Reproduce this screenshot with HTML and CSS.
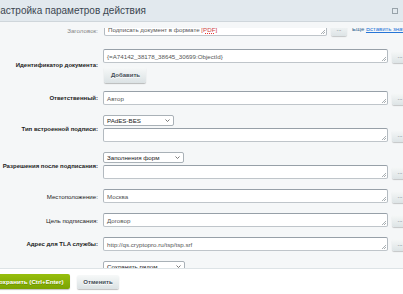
FILE: index.html
```html
<!DOCTYPE html>
<html lang="ru">
<head>
    <meta charset="UTF-8">
    <title>Настройка параметров действия</title>
    <link rel="stylesheet" href="styles.css">
</head>
<body>
<div class="dialog">
    <div class="titlebar">
        <span class="title">Настройка параметров действия</span>
        <span class="close"></span>
    </div>

    <div class="content">
        <div class="scroll">
            <div class="form">
                <!-- Заголовок -->
                <div class="label faint">Заголовок:</div>
                <div class="field row0">
                    <div class="line">
                        <span class="area short"><span class="box">Подписать документ в формате <span class="typo">[PDF]</span></span></span>
                        <button class="dots">...</button>
                        <span class="more">Ещё <a href="#">Вставить значение</a></span>
                    </div>
                </div>

                <!-- Идентификатор -->
                <div class="label bold">Идентификатор документа:</div>
                <div class="field row1">
                    <div class="line">
                        <span class="area"><textarea>{=A74142_38178_38645_30699:ObjectId}</textarea></span>
                        <button class="dots">...</button>
                    </div>
                    <button class="btn add">Добавить</button>
                </div>

                <div class="label bold">Ответственный:</div>
                <div class="field">
                    <div class="line">
                        <span class="area"><textarea>Автор</textarea></span>
                        <button class="dots">...</button>
                    </div>
                </div>

                <div class="label bold">Тип встроенной подписи:</div>
                <div class="field">
                    <div class="select w71"><span>PAdES-BES</span><svg width="5" height="3" viewBox="0 0 5 3"><path d="M0.5 0.5 L2.5 2.5 L4.5 0.5" fill="none" stroke="#555" stroke-width="0.8"/></svg></div>
                    <div class="line">
                        <span class="area"><textarea></textarea></span>
                        <button class="dots">...</button>
                    </div>
                </div>

                <div class="label bold">Разрешения после подписания:</div>
                <div class="field">
                    <div class="select w81"><span>Заполнения форм</span><svg width="5" height="3" viewBox="0 0 5 3"><path d="M0.5 0.5 L2.5 2.5 L4.5 0.5" fill="none" stroke="#555" stroke-width="0.8"/></svg></div>
                    <div class="line">
                        <span class="area"><textarea></textarea></span>
                        <button class="dots">...</button>
                    </div>
                </div>

                <div class="label">Местоположение:</div>
                <div class="field">
                    <div class="line">
                        <span class="area"><textarea>Москва</textarea></span>
                        <button class="dots">...</button>
                    </div>
                </div>

                <div class="label">Цель подписания:</div>
                <div class="field">
                    <div class="line">
                        <span class="area"><textarea>Договор</textarea></span>
                        <button class="dots">...</button>
                    </div>
                </div>

                <div class="label bold">Адрес для TLA службы:</div>
                <div class="field">
                    <div class="line">
                        <span class="area"><textarea>http://qs.cryptopro.ru/tsp/tsp.srf</textarea></span>
                        <button class="dots">...</button>
                    </div>
                </div>

                <div class="label bold">Сохранить подписанный:</div>
                <div class="field">
                    <div class="select w82"><span>Сохранить рядом</span><svg width="5" height="3" viewBox="0 0 5 3"><path d="M0.5 0.5 L2.5 2.5 L4.5 0.5" fill="none" stroke="#555" stroke-width="0.8"/></svg></div>
                    <div class="line">
                        <span class="area"><textarea></textarea></span>
                        <button class="dots">...</button>
                    </div>
                </div>
            </div>
        </div>
    </div>

    <div class="footer">
        <button class="btn-save">Сохранить (Ctrl+Enter)</button>
        <button class="btn cancel">Отменить</button>
    </div>
</div>
</body>
</html>
```

FILE: styles.css
```css
/* Global */
body {
    margin: 0;
    width: 403px;
    height: 294px;
    overflow: hidden;
    font-family: "Liberation Sans", Arial, sans-serif;
    background-color: #f5f7f8;
    color: #000;
}

.dialog {
    display: flex;
    flex-direction: column;
    height: 294px;
    width: 403px;
}

/* Title bar */
.titlebar {
    flex-shrink: 0;
    height: 21px;
    background-color: #e2e9ee;
    border-bottom: 1px solid #cfd6db;
    display: flex;
    align-items: center;
    justify-content: space-between;
    padding-right: 5px;
}

.title {
    font-size: 10px;
    color: #3b4650;
    margin-left: -7px;
    white-space: nowrap;
}

.close {
    width: 4px;
    height: 4px;
    border: 1px solid #98a3aa;
}

/* Scrolling content */
.content {
    flex: 1;
    display: flex;
    flex-direction: column;
    padding-top: 6px;
    min-height: 0;
    background-color: #f5f7f8;
}

.scroll {
    flex: 1;
    overflow: hidden;
}

.form {
    display: grid;
    grid-template-columns: 98px 320px;
    column-gap: 5px;
    row-gap: 10px;
    align-items: center;
    margin-top: -6px;
}

.label {
    text-align: right;
    font-size: 6.2px;
    color: #1d1d1d;
    white-space: nowrap;
}

.label.bold {
    font-weight: bold;
    font-size: 6px;
}

.label.faint {
    color: #888;
}

.field {
    display: flex;
    flex-direction: column;
    align-items: flex-start;
}

.row0 {
    margin-bottom: 3px;
}

.line {
    display: flex;
    align-items: flex-end;
    gap: 4px;
}

/* Text fields */
.area {
    position: relative;
    display: block;
    width: 285px;
    height: 14px;
}

.area.short {
    width: 223px;
    margin-left: 1px;
}

.area::after {
    content: "";
    position: absolute;
    right: 2px;
    bottom: 2px;
    width: 4px;
    height: 4px;
    background: linear-gradient(135deg, transparent 45%, #a9b0b4 45%, #a9b0b4 55%, transparent 55%, transparent 75%, #a9b0b4 75%, #a9b0b4 85%, transparent 85%);
}

textarea,
.box {
    display: block;
    box-sizing: border-box;
    width: 100%;
    height: 100%;
    resize: none;
    overflow: hidden;
    margin: 0;
    padding: 3px 3px 0;
    border: 1px solid;
    border-color: #97a0a8 #b3bac0 #bfc5ca #b3bac0;
    border-radius: 2px;
    background-color: #fff;
    font-family: "Liberation Sans", Arial, sans-serif;
    font-size: 6.2px;
    line-height: 7px;
    color: #555;
    white-space: nowrap;
}

.typo {
    color: #c44;
    text-decoration: underline dotted #e33;
}

.dots {
    width: 16px;
    height: 12px;
    padding: 0 0 3px;
    border: none;
    border-radius: 2px;
    background: linear-gradient(#f6f8f8, #dde4e6);
    box-shadow: 0 1px 1px rgba(0, 0, 0, 0.2);
    font-size: 6px;
    color: #4a545c;
    line-height: 6px;
    flex-shrink: 0;
}

.more {
    font-size: 6px;
    color: #2b5f8f;
    white-space: nowrap;
    align-self: center;
    margin-left: 1px;
}

.more a {
    color: #2675d7;
}

/* Selects */
.select {
    box-sizing: border-box;
    height: 11px;
    margin-bottom: 2px;
    padding: 0 3px 0 3px;
    background-color: #fff;
    border: 1px solid #a9b1b7;
    border-radius: 2px;
    display: flex;
    align-items: center;
    justify-content: space-between;
    font-size: 6.2px;
    color: #222;
}

.w71 { width: 71px; }
.w81 { width: 81px; }
.w82 { width: 82px; }

/* Buttons */
.btn {
    height: 16px;
    padding: 0 7px;
    border: none;
    border-radius: 2px;
    background: linear-gradient(#f7f9f9, #dbe2e4);
    box-shadow: 0 1px 1px rgba(0, 0, 0, 0.25);
    font-family: "Liberation Sans", Arial, sans-serif;
    font-weight: bold;
    font-size: 6px;
    color: #3f4b54;
    text-shadow: 0 1px #fff;
}

.add {
    width: 42px;
    margin-top: 4px;
    margin-left: 1px;
    margin-bottom: -2px;
}

/* Footer */
.footer {
    flex-shrink: 0;
    height: 25px;
    border-top: 1px solid #dde3e6;
    background-color: #fff;
    display: flex;
    align-items: center;
    gap: 7px;
}

.btn-save {
    height: 15px;
    width: 82px;
    padding: 0;
    margin-left: -12px;
    border: none;
    border-radius: 2px;
    background: linear-gradient(#97bf0d, #7aa300);
    box-shadow: 0 1px 1px rgba(0, 0, 0, 0.25);
    font-family: "Liberation Sans", Arial, sans-serif;
    font-weight: bold;
    font-size: 6.2px;
    color: #fff;
    text-shadow: 0 1px rgba(0, 0, 0, 0.2);
    white-space: nowrap;
}

.cancel {
    height: 14px;
    width: 42px;
    padding: 0;
}
```
